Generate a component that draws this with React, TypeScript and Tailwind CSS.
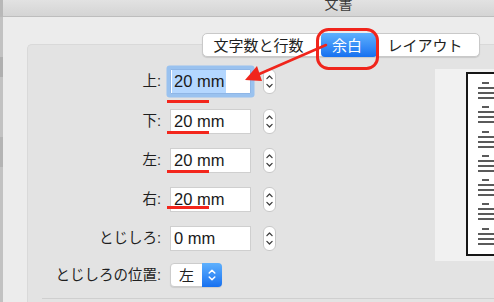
import React from "react";

function Stepper() {
  return (
    <svg width="13" height="25" viewBox="0 0 13 25" className="shrink-0">
      <rect x="0.5" y="0.5" width="12" height="24" rx="5.5" fill="#ffffff" stroke="#c8c8c8" />
      <path d="M3.9 9.6 L6.5 7 L9.1 9.6" fill="none" stroke="#3c3c3c" strokeWidth="1.3" strokeLinecap="round" strokeLinejoin="round" />
      <path d="M3.9 15.4 L6.5 18 L9.1 15.4" fill="none" stroke="#3c3c3c" strokeWidth="1.3" strokeLinecap="round" strokeLinejoin="round" />
    </svg>
  );
}

type RowProps = {
  label: string;
  value: string;
  focused?: boolean;
  underline?: string;
  rowClass: string;
};

function Row({ label, value, focused, underline, rowClass }: RowProps) {
  return (
    <div className={rowClass}>
      <div className="w-[133px] text-right text-[14.5px] leading-none text-[#1f1f1f] whitespace-nowrap">{label}</div>
      <div
        className={
          focused
            ? "relative ml-[9px] w-[81px] h-[25px] bg-white border border-[#8fb6e6] shadow-[0_0_0_3.5px_#9ac2ef] rounded-[1px] flex items-center pl-[1px]"
            : "relative ml-[9px] w-[81px] h-[25px] bg-white border border-[#cfcfcf] flex items-center pl-[1px]"
        }
      >
        <span
          className={
            focused
              ? "h-[23px] flex items-center px-[2px] bg-[#b4d7ff] text-[16.5px] leading-none text-[#1a1a1a]"
              : "h-[23px] flex items-center px-[2px] text-[16.5px] leading-none text-[#1a1a1a]"
          }
        >
          {value}
        </span>
        {underline ? <div className={underline} /> : null}
      </div>
      <div className="ml-[12px]">
        <Stepper />
      </div>
    </div>
  );
}

function Group() {
  return (
    <div className="flex flex-col gap-[3px]">
      <div className="ml-[14px] w-[7px] h-[2px] bg-[#5a5a5a]" />
      <div className="ml-[10px] w-[30px] h-[2px] bg-[#5a5a5a]" />
      <div className="ml-[10px] w-[30px] h-[2px] bg-[#5a5a5a]" />
      <div className="ml-[10px] w-[30px] h-[2px] bg-[#5a5a5a]" />
    </div>
  );
}

export default function App() {
  return (
    <div className="relative w-[494px] h-[302px] overflow-hidden bg-[#ececec] flex font-['Liberation_Sans','Noto_Sans_CJK_JP',sans-serif]">
      <div className="w-[3px] h-full bg-[#c2c2c2] flex flex-col">
        <div className="h-[17px] bg-[#b8b8b8]" />
        <div className="h-[40px]" />
        <div className="h-[20px] bg-[#b0b0b0]" />
        <div className="h-[60px]" />
        <div className="h-[30px] bg-[#b4b4b4]" />
      </div>
      <div className="flex-1 flex flex-col min-w-0">
        <div className="h-[17px] shrink-0 bg-gradient-to-b from-[#e2e2e2] to-[#d4d4d4] border-b border-[#bdbdbd] flex justify-center pl-[180px] overflow-hidden">
          <span className="text-[14px] leading-[14px] mt-[-3px] text-[#3a3a3a]">文書</span>
        </div>
        <div className="flex-1 flex pl-[24px] pt-[27px] min-h-0">
          <div className="flex-1 flex flex-col bg-[#e3e3e3] border-t border-l border-[#d9d9d9] rounded-tl-[5px] min-w-0">
            <div className="flex mt-[-12px] ml-[174px]">
              <div className="flex h-[24px] bg-white border border-[#c9c9c9] rounded-[5px] shadow-[0_1px_1px_rgba(0,0,0,0.12)] text-[15px] leading-none text-[#1e1e1e]">
                <div className="w-[118px] flex items-center justify-center pr-[7px]">文字数と行数</div>
                <div className="w-[56px] -my-px flex items-center justify-center pr-[4px] rounded-[4px] bg-gradient-to-b from-[#5eb0fd] to-[#1670f0] text-white">余白</div>
                <div className="w-[102px] flex items-center justify-center pr-[6px]">レイアウト</div>
              </div>
            </div>
            <div className="flex items-start mt-[12px]">
              <div className="w-[249px] flex flex-col">
                <Row
                  label="上:"
                  value="20 mm"
                  focused
                  rowClass="flex items-center h-[25px]"
                  underline="absolute left-[-4px] top-[30px] w-[42px] h-[3px] bg-[#f3261c]"
                />
                <Row
                  label="下:"
                  value="20 mm"
                  rowClass="flex items-center h-[25px] mt-[15px]"
                  underline="absolute left-[-4px] top-[21px] w-[42px] h-[3px] bg-[#f3261c]"
                />
                <Row
                  label="左:"
                  value="20 mm"
                  rowClass="flex items-center h-[25px] mt-[14px]"
                  underline="absolute left-[-4px] top-[21px] w-[42px] h-[3px] bg-[#f3261c]"
                />
                <Row
                  label="右:"
                  value="20 mm"
                  rowClass="flex items-center h-[25px] mt-[14px]"
                  underline="absolute left-[-4px] top-[18px] w-[42px] h-[3px] bg-[#f3261c]"
                />
                <Row label="とじしろ:" value="0 mm" rowClass="flex items-center h-[25px] mt-[14px]" />
                <div className="flex items-center h-[24px] mt-[12px]">
                  <div className="w-[133px] text-right text-[14.5px] leading-none text-[#1f1f1f] whitespace-nowrap">とじしろの位置:</div>
                  <div className="ml-[9px] w-[52px] h-[24px] flex bg-white border border-[#cccccc] rounded-[4px] shadow-[0_1px_1px_rgba(0,0,0,0.1)]">
                    <div className="flex-1 flex items-center justify-center text-[15px] leading-none text-[#222]">左</div>
                    <div className="w-[20px] -my-px -mr-px rounded-r-[4px] bg-gradient-to-b from-[#5eb0fd] to-[#1670f0] flex items-center justify-center">
                      <svg width="10" height="16" viewBox="0 0 10 16">
                        <path d="M2.2 6 L5 3.2 L7.8 6" fill="none" stroke="#ffffff" strokeWidth="1.5" strokeLinecap="round" strokeLinejoin="round" />
                        <path d="M2.2 10 L5 12.8 L7.8 10" fill="none" stroke="#ffffff" strokeWidth="1.5" strokeLinecap="round" strokeLinejoin="round" />
                      </svg>
                    </div>
                  </div>
                </div>
              </div>
              <div className="ml-[159px] w-[60px] h-[192px] shrink-0 bg-[#f1f1f1] pl-[31px] pt-[3px]">
                <div className="w-[40px] h-[184px] bg-white border-2 border-[#161616] flex flex-col gap-[7.3px] pt-[8px]">
                  <Group />
                  <Group />
                  <Group />
                  <Group />
                  <Group />
                  <Group />
                  <Group />
                </div>
              </div>
            </div>
            <div className="mt-auto mb-[3px] ml-[14px] h-px bg-[#cfcfcf]" />
          </div>
        </div>
      </div>
      <svg className="absolute inset-0 pointer-events-none" width="494" height="302" viewBox="0 0 494 302">
        <rect x="317.5" y="29.5" width="60" height="39" rx="11" fill="none" stroke="#f0251c" strokeWidth="3" />
        <line x1="326" y1="45" x2="257" y2="75" stroke="#f0251c" strokeWidth="2.5" strokeLinecap="round" />
        <polygon points="245,80 257,66 262,81" fill="#f0251c" />
      </svg>
    </div>
  );
}
